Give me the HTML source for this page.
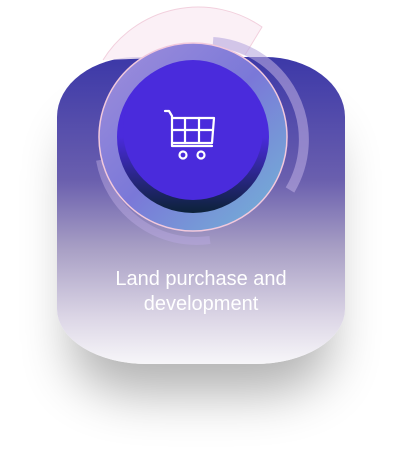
<!DOCTYPE html><html><head><style>
body{margin:0;width:414px;height:475px;background:#fff;overflow:hidden;position:relative;font-family:"Liberation Sans",sans-serif}
.card{position:absolute;left:57px;top:57px;width:288px;height:307px;border-radius:80px 80px 90px 90px/60px 60px 55px 55px;background:linear-gradient(#3c38a8 0%,#6a5fae 40%,#a79ec4 62%,#dcd6e6 85%,#f7f6f9 100%);box-shadow:0 45px 50px -15px rgba(0,0,0,.3)}
.t{position:absolute;left:57px;width:288px;top:267px;text-align:center;color:#fff;font-size:20px;line-height:25px}
</style></head><body>
<div class="card"></div>
<svg style="position:absolute;left:0;top:0" width="414" height="475">
<defs>
<linearGradient id="r" x1="0" y1="0" x2="1" y2="1"><stop offset="0" stop-color="#a08fdc"/><stop offset=".5" stop-color="#7a78d8"/><stop offset="1" stop-color="#72b8d6"/></linearGradient>
<linearGradient id="d" x1="0" y1="0" x2="0" y2="1"><stop offset=".5" stop-color="#4a2bdc"/><stop offset="1" stop-color="#0c2238"/></linearGradient>
</defs>
<path d="M103 60 A112 112 0 0 1 262 27 L245 55" fill="#fbeef5" stroke="#f0c8d8" opacity=".85"/>
<path d="M213 42 A98 98 0 0 1 290 190" fill="none" stroke="#b7a8e0" stroke-width="10" opacity=".6"/>
<path d="M100 160 A98 98 0 0 0 210 240" fill="none" stroke="#b7a8e0" stroke-width="8" opacity=".5"/>
<circle cx="193" cy="137" r="94" fill="url(#r)" stroke="#f2c9dc" stroke-width="1.5"/>
<circle cx="193" cy="137" r="76" fill="url(#d)"/>
<circle cx="193" cy="130" r="70" fill="#4a2bdc"/>
<g fill="none" stroke="#fff" stroke-width="2.2" stroke-linecap="round" stroke-linejoin="round">
<path d="M165 111h4l3 5v30h40"/><path d="M172 118h42l-2 25h-40"/><path d="M185 118v25M199 118v25M172 130h41"/>
<circle cx="183" cy="155" r="3.5"/><circle cx="201" cy="155" r="3.5"/>
</g>
</svg>
<div class="t">Land purchase and<br>development</div>
</body></html>
